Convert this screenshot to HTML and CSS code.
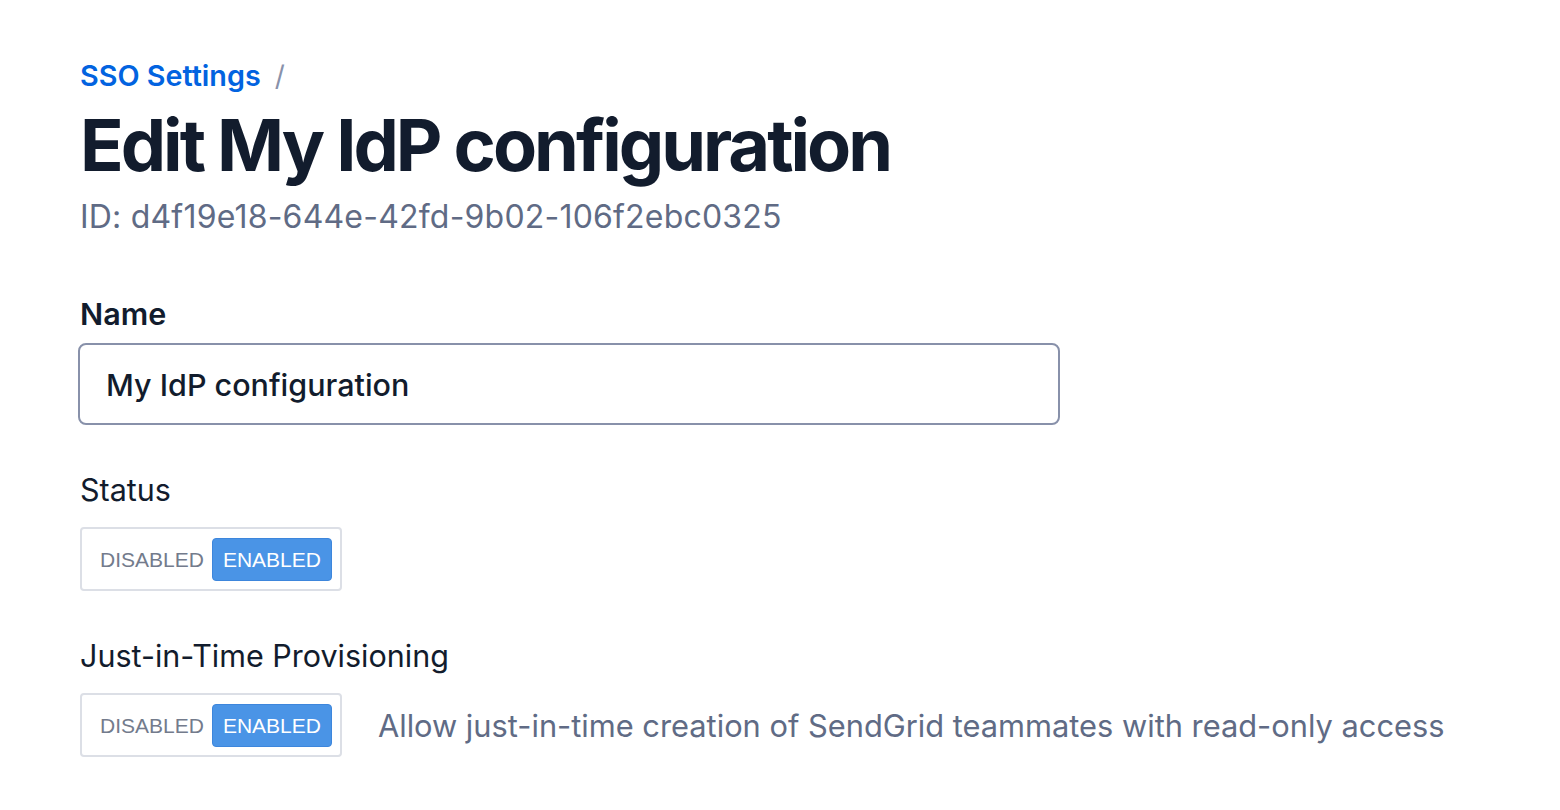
FILE: index.html
```html
<!DOCTYPE html>
<html lang="en">
<head>
<meta charset="utf-8">
<title>Edit My IdP configuration</title>
<link rel="stylesheet" href="styles.css">
</head>
<body>
<main class="page">
  <nav class="breadcrumb">
    <a class="crumb-link" href="#">SSO Settings</a>
    <span class="crumb-sep">/</span>
  </nav>
  <h1 class="title">Edit My IdP configuration</h1>
  <p class="subtitle">ID: d4f19e18-644e-42fd-9b02-106f2ebc0325</p>

  <div class="field field-name">
    <label class="label-strong" for="name">Name</label>
    <div class="input-box"><span class="input-text" id="name">My IdP configuration</span></div>
  </div>

  <div class="field field-toggle">
    <div class="label">Status</div>
    <div class="toggle-row">
      <div class="toggle">
        <span class="opt opt-off">DISABLED</span>
        <span class="opt opt-on">ENABLED</span>
      </div>
    </div>
  </div>

  <div class="field field-toggle">
    <div class="label">Just-in-Time Provisioning</div>
    <div class="toggle-row">
      <div class="toggle">
        <span class="opt opt-off">DISABLED</span>
        <span class="opt opt-on">ENABLED</span>
      </div>
      <span class="help">Allow just-in-time creation of SendGrid teammates with read-only access</span>
    </div>
  </div>
</main>
</body>
</html>
```
FILE: styles.css
```css
html, body {
  margin: 0;
  padding: 0;
  background: #ffffff;
}
body {
  font-family: Inter, "Noto Sans", sans-serif;
  color: #121c2d;
}
.page {
  padding: 56px 0 0 80px;
}
.breadcrumb {
  display: flex;
  align-items: center;
  gap: 14px;
  height: 40px;
}
.crumb-link {
  font-size: 28.75px;
  font-weight: 600;
  line-height: 40px;
  color: #0263e0;
  text-decoration: none;
}
.crumb-sep {
  font-size: 28px;
  line-height: 40px;
  color: #8891aa;
}
.title {
  margin: 2px 0 0;
  font-size: 72px;
  font-weight: 700;
  letter-spacing: -3px;
  line-height: 94px;
  color: #121c2d;
}
.subtitle {
  margin: 3px 0 0;
  font-size: 32px;
  letter-spacing: 0.2px;
  line-height: 44px;
  color: #606b85;
}
.field-name {
  margin-top: 55px;
}
.label-strong {
  display: block;
  font-size: 30.5px;
  font-weight: 600;
  line-height: 40px;
  margin-bottom: 9px;
}
.input-box {
  width: 952px;
  height: 78px;
  border: 2px solid #8891aa;
  border-radius: 8px;
  display: flex;
  align-items: center;
  padding-left: 26px;
  margin-left: -2px;
}
.input-text {
  font-size: 30.5px;
  font-weight: 500;
  color: #121c2d;
}
.field-toggle {
  margin-top: 45px;
}
.label {
  font-size: 30.5px;
  line-height: 40px;
  margin-bottom: 17px;
}
.toggle-row {
  display: flex;
  align-items: center;
  gap: 36px;
}
.toggle {
  display: flex;
  align-items: center;
  gap: 8px;
  height: 60px;
  padding: 0 8px 0 18px;
  border: 2px solid #dcdfe6;
  border-radius: 4px;
}
.opt {
  font-family: "Liberation Sans", Arial, sans-serif;
  font-size: 21px;
  line-height: 43px;
}
.opt-off {
  color: #737b8c;
}
.opt-on {
  color: #ffffff;
  background: #4a94e6;
  border: 1px solid #3d86dc;
  border-radius: 4px;
  padding: 0 10px;
  line-height: 41px;
}
.help {
  font-size: 30.8px;
  color: #606b85;
}
```
